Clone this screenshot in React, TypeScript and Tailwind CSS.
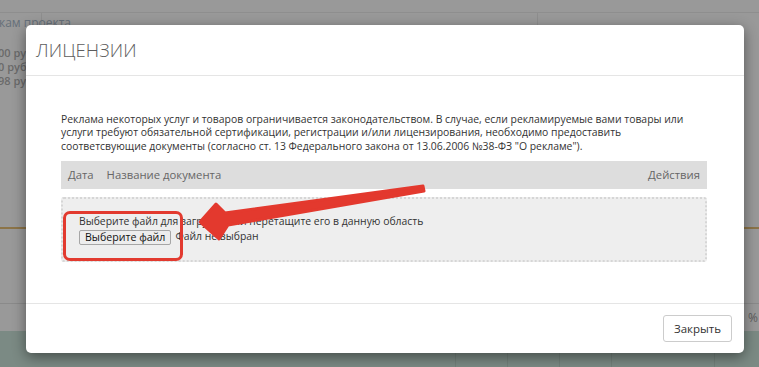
import React from 'react';

const App: React.FC = () => {
  return (
    <div className="relative w-[759px] h-[367px] overflow-hidden bg-[#999999] font-['Open_Sans',sans-serif]">
      {/* faded page behind the overlay */}
      <div className="flex flex-col h-full">
        <div className="h-[13px] border-b border-[#8e8e8e]" />
        <div className="flex h-[12px]">
          <div className="w-[42px] border-r border-[#8e8e8e]" />
          <div className="w-[496px] border-r border-[#8e8e8e]" />
        </div>
        <div className="-mt-[9px] -ml-[1px] text-[12px] leading-[14px] text-[#66707a] whitespace-nowrap">кам проекта</div>
        <div className="mt-[16px] -ml-[2px] flex flex-col text-[11px] leading-[14px] font-semibold text-[#6a6a6a] whitespace-nowrap">
          <span>00 руб</span>
          <span>0 руб.</span>
          <span>98 ру</span>
        </div>
        <div className="mt-[139px] h-[2px] bg-[#8c7448]" />
        <div className="mt-[74px] h-[1px] bg-[#8a8a8a]" />
        <div className="flex justify-end pr-[1px] h-[27px] items-center">
          <span className="text-[12px] text-[#5d5d5d]">%</span>
        </div>
        <div className="flex-1 flex bg-[#7b8a84]">
          <div className="w-[456px] border-r border-[#72807a]" />
          <div className="w-[52px] border-r border-[#72807a]" />
          <div className="w-[52px] border-r border-[#72807a]" />
          <div className="w-[52px] border-r border-[#72807a]" />
          <div className="w-[103px] border-r border-[#72807a]" />
        </div>
      </div>

      {/* modal */}
      <div className="absolute left-[26px] top-[25px] w-[718px] h-[328px] bg-white rounded-[5px] shadow-[0_4px_14px_rgba(0,0,0,0.45)] flex flex-col">
        <div className="h-[51px] pl-[10px] flex items-center border-b border-[#e5e5e5]">
          <h2 className="text-[18.5px] font-light text-[#5c5c5c] tracking-[0.1px]">ЛИЦЕНЗИИ</h2>
        </div>
        <div className="flex-1 pl-[35px] pr-[37px] pt-[37px] flex flex-col">
          <p className="text-[10.4px] leading-[13.4px] text-[#333] whitespace-nowrap">
            Реклама некоторых услуг и товаров ограничивается законодательством. В случае, если рекламируемые вами товары или
            <br />
            услуги требуют обязательной сертификации, регистрации и/или лицензирования, необходимо предоставить
            <br />
            соответсвующие документы (согласно ст. 13 Федерального закона от 13.06.2006 №38-ФЗ "О рекламе").
          </p>
          <div className="mt-[8px] h-[28px] bg-[#dddddd] flex items-center px-[7px] text-[11.3px] text-[#666]">
            <span>Дата</span>
            <span className="ml-[13px]">Название документа</span>
            <span className="ml-auto">Действия</span>
          </div>
          <div className="mt-[8px] h-[65px] bg-[#eeeeee] border-2 border-dotted border-[#d6d6d6] rounded-[3px] pl-[16px] pt-[15px] text-[10.4px] text-[#333]">
            <div className="leading-[14px] whitespace-nowrap">Выберите файл для загрузки или перетащите его в данную область</div>
            <div className="flex items-center mt-[1px]">
              <button className="h-[15px] px-[5px] text-[10.6px] leading-[13px] text-[#111] bg-[#ededed] border border-[#a6a6a6] rounded-[2px]">
                Выберите файл
              </button>
              <span className="ml-[4px]">Файл не выбран</span>
            </div>
          </div>
        </div>
        <div className="h-[50px] border-t border-[#e5e5e5] flex justify-end items-start pt-[11px] pr-[12px]">
          <button className="w-[69px] h-[27px] border border-[#cccccc] rounded-[3px] text-[11.5px] text-[#333] bg-white">
            Закрыть
          </button>
        </div>
      </div>

      {/* annotation: red frame */}
      <div className="absolute left-[63px] top-[211px] w-[120px] h-[50px] border-[3px] border-[#e23a2f] rounded-[7px]" />

      {/* annotation: red arrow */}
      <svg className="absolute left-0 top-0" width="759" height="367" viewBox="0 0 759 367">
        <polygon
          points="200,222 216,204 225,213 423,186 424,191 228,225 219,239"
          fill="#e3392e"
          stroke="#e3392e"
          strokeWidth="3"
          strokeLinejoin="round"
        />
      </svg>
    </div>
  );
};

export default App;
